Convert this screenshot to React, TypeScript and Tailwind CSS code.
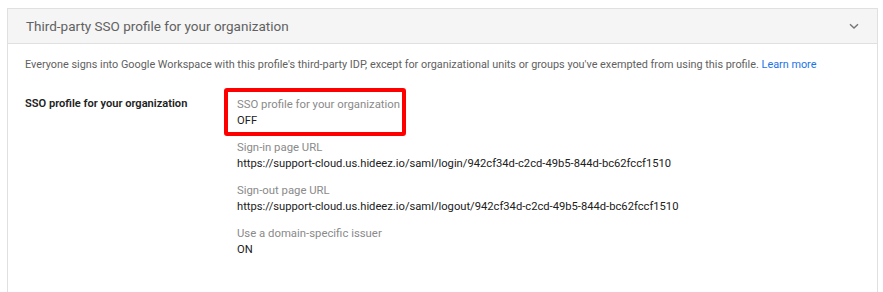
import React from "react";

const items = [
  { label: "Sign-in page URL", value: "https://support-cloud.us.hideez.io/saml/login/942cf34d-c2cd-49b5-844d-bc62fccf1510" },
  { label: "Sign-out page URL", value: "https://support-cloud.us.hideez.io/saml/logout/942cf34d-c2cd-49b5-844d-bc62fccf1510" },
  { label: "Use a domain-specific issuer", value: "ON" },
];

export default function App() {
  return (
    <div className="w-[883px] h-[292px] bg-white overflow-hidden pt-[8px] pl-[7px] pr-[5px]" style={{ fontFamily: "Roboto, 'Noto Sans', sans-serif" }}>
      <div className="border border-[#e0e0e0] border-b-0 h-[300px]">
        <div className="h-[35px] bg-[#f5f5f5] border-b border-[#e0e0e0] flex items-center justify-between pl-[18px] pr-[16px]">
          <span className="text-[13.5px] text-[#616161] leading-[20px]">Third-party SSO profile for your organization</span>
          <svg width="12" height="12" viewBox="0 0 12 12" className="mr-[1px]">
            <path d="M2 4.2 L6 8 L10 4.2" fill="none" stroke="#757575" strokeWidth="1.4" />
          </svg>
        </div>
        <div className="pl-[17px] pt-[13px]">
          <p className="text-[10.85px] leading-[16px] text-[#616161]">
            Everyone signs into Google Workspace with this profile's third-party IDP, except for organizational units or groups you've exempted from using this profile.{" "}
            <span className="text-[#1a73e8]">Learn more</span>
          </p>
          <div className="flex mt-[23px]">
            <div className="w-[212px] text-[11.1px] leading-[16px] font-semibold text-[#212121]">SSO profile for your organization</div>
            <div className="flex flex-col gap-[10px]">
              <div className="relative">
                <div className="text-[11.35px] leading-[16px] text-[#8a8a8a]">SSO profile for your organization</div>
                <div className="text-[11.2px] leading-[17px] text-[#212121]">OFF</div>
                <div className="absolute left-[-13px] top-[-8px] w-[182px] h-[48px] border-[4px] border-[#ff0000] rounded-[3px]" />
              </div>
              {items.map((it) => (
                <div key={it.label}>
                  <div className="text-[11.35px] leading-[16px] text-[#8a8a8a]">{it.label}</div>
                  <div className="text-[11.2px] leading-[17px] text-[#212121]">{it.value}</div>
                </div>
              ))}
            </div>
          </div>
        </div>
      </div>
    </div>
  );
}
